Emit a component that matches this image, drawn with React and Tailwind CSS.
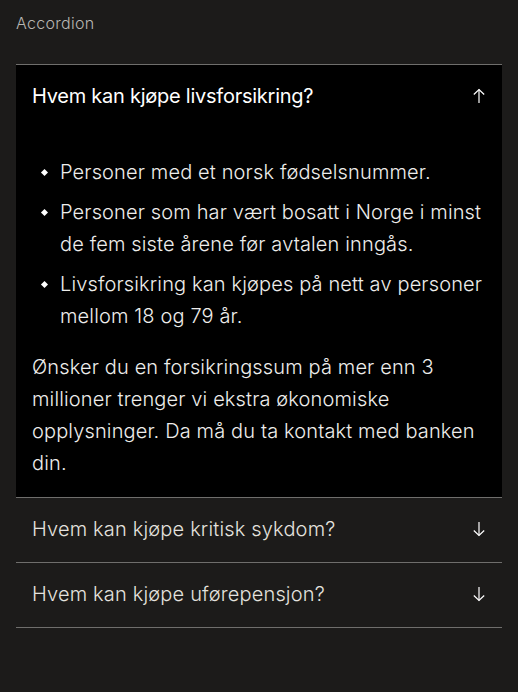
import { useState } from 'react';

const items = [
  {
    id: 1,
    title: 'Hvem kan kjøpe livsforsikring?',
    bullets: [
      'Personer med et norsk fødselsnummer.',
      'Personer som har vært bosatt i Norge i minst de fem siste årene før avtalen inngås.',
      'Livsforsikring kan kjøpes på nett av personer mellom 18 og 79 år.',
    ],
    text: 'Ønsker du en forsikringssum på mer enn 3 millioner trenger vi ekstra økonomiske opplysninger. Da må du ta kontakt med banken din.',
  },
  { id: 2, title: 'Hvem kan kjøpe kritisk sykdom?' },
  { id: 3, title: 'Hvem kan kjøpe uførepensjon?' },
];

function Arrow({ up }) {
  return (
    <svg width="14" height="16" viewBox="0 0 14 16" fill="none" stroke="currentColor" strokeWidth="1.2" className={up ? '' : 'rotate-180'}>
      <path d="M7 1.5 V15" />
      <path d="M1.8 6.5 L7 1.5 L12.2 6.5" />
    </svg>
  );
}

export default function App() {
  const [open, setOpen] = useState(1);

  return (
    <div className="min-h-[692px] bg-[#1c1b1a] px-4 pt-[11px] font-['Inter',sans-serif] text-white">
      <div className="text-base font-light tracking-[0.3px] text-[#b8b6b3] leading-6 mb-[29px]">Accordion</div>
      <div className="border-t border-[#6f6e6c]">
        {items.map(item => {
          const isOpen = open === item.id;
          return (
            <div key={item.id} className={`border-b border-[#6f6e6c] ${isOpen ? 'bg-black' : ''}`}>
              <button
                onClick={() => setOpen(isOpen ? null : item.id)}
                className="w-full flex items-center justify-between pl-4 pr-[16px] pt-[15px] pb-[17px] text-left"
              >
                <span className={`text-xl leading-8 ${isOpen ? 'font-normal tracking-[-0.25px] text-white' : 'font-light tracking-[0.17px] text-[#e4e2df]'}`}>{item.title}</span>
                <span className="text-white"><Arrow up={isOpen} /></span>
              </button>
              {isOpen && (
                <div className="px-4 pt-[27px] pb-[18px] text-xl leading-8 font-light tracking-[0.14px] text-[#eeedeb]">
                  <ul className="space-y-2">
                    {item.bullets.map(b => (
                      <li key={b} className="flex gap-[13px]">
                        <span className="mt-[14px] ml-[10px] w-[5px] h-[5px] shrink-0 rotate-45 bg-white" />
                        <span>{b}</span>
                      </li>
                    ))}
                  </ul>
                  <p className="mt-[19px]">{item.text}</p>
                </div>
              )}
            </div>
          );
        })}
      </div>
    </div>
  );
}
